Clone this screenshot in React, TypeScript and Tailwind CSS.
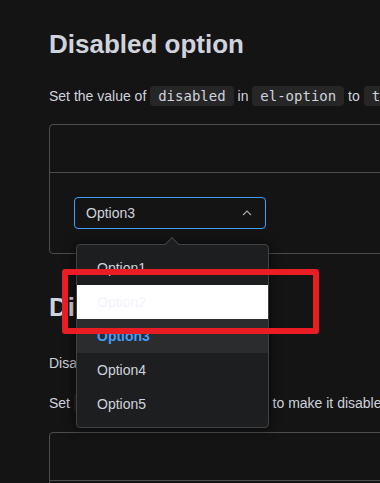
const sans = { fontFamily: "'Liberation Sans', Arial, sans-serif" };

function Code({ children }: { children: string }) {
  return (
    <code className="rounded-[4px] bg-[#262626] px-2 py-[2px] text-[14px] text-[#cfd3dc] [font-family:'DejaVu_Sans_Mono',monospace]">
      {children}
    </code>
  );
}

function DemoBox({ children }: { children?: React.ReactNode }) {
  return (
    <div className="w-[640px] rounded-[4px] border border-[#4c4d4f]">
      <div className="h-[48px] border-b border-[#4c4d4f]" />
      <div className="p-6">{children}</div>
    </div>
  );
}

const options = ["Option1", "Option2", "Option3", "Option4", "Option5"];

export default function App() {
  return (
    <div
      className="relative h-[483px] w-[380px] overflow-hidden bg-[#141414] text-[#cfd3dc]"
      style={sans}
    >
      <div className="w-[700px] pl-[49px] pt-[28px]">
        {/* Disabled option */}
        <h2 className="text-[26px] font-bold leading-[32px] text-[#d0d3db]">Disabled option</h2>
        <p className="mt-[25px] text-[14px] leading-[22px] whitespace-nowrap">
          Set the value of <Code>disabled</Code> in <Code>el-option</Code> to <Code>true</Code> to
          disable this option.
        </p>
        <div className="mt-[17px]">
          <DemoBox>
            <div className="flex h-[32px] w-[192px] items-center justify-between rounded-[4px] border border-[#409eff] pl-[11px] pr-[11px]">
              <span className="text-[14px] text-[#cfd3dc]">Option3</span>
              <svg width="14" height="14" viewBox="0 0 14 14" fill="none">
                <path d="M3 9L7 5L11 9" stroke="#a3a6ad" strokeWidth="1.2" />
              </svg>
            </div>
          </DemoBox>
        </div>

        {/* Disabled select */}
        <h2 className="mt-[37px] text-[26px] font-bold leading-[32px] text-[#d0d3db]">Disabled select</h2>
        <p className="mt-[29px] text-[14px] leading-[22px]">Disable the whole component.</p>
        <p className="mt-[18px] text-[14px] leading-[22px] whitespace-nowrap">
          Set <Code>disabled</Code> of <Code>el-select</Code> to make it disabled.
        </p>
        <div className="mt-[18px]">
          <DemoBox />
        </div>
      </div>

      {/* dropdown */}
      <div className="absolute left-[76px] top-[244px] w-[193px] rounded-[4px] border border-[#414243] bg-[#1d1e1f] py-[6px] shadow-[0_0_12px_rgba(0,0,0,0.72)]">
        <div className="absolute left-[90px] top-[-6px] h-[10px] w-[10px] rotate-45 border-l border-t border-[#414243] bg-[#1d1e1f]" />
        {options.map((o) => (
          <div
            key={o}
            className={
              o === "Option2"
                ? "flex h-[34px] items-center bg-white px-5 text-[14px] text-[#f3f4fb]"
                : o === "Option3"
                ? "flex h-[34px] items-center bg-[#2b2c2e] px-5 text-[14px] font-bold text-[#409eff]"
                : "flex h-[34px] items-center px-5 text-[14px] text-[#cfd3dc]"
            }
          >
            {o}
          </div>
        ))}
      </div>

      {/* annotation */}
      <div className="absolute left-[62px] top-[269px] h-[65px] w-[257px] rounded-[3px] border-[6px] border-[#ea1c24]" />
    </div>
  );
}
